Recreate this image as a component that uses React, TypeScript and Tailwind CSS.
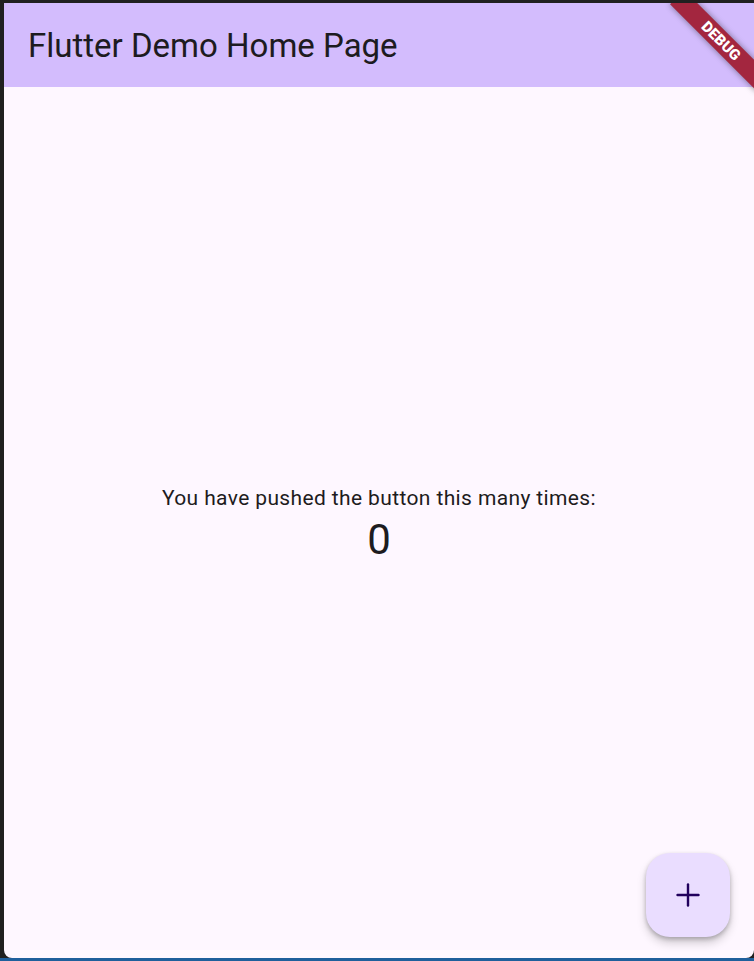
import { Plus } from "lucide-react";

const App = () => {
  return (
    <div className="w-[754px] h-[961px] bg-[#202020] flex flex-col overflow-hidden font-['Roboto',sans-serif]">
      <div className="flex-1 flex pt-[3px] pl-[4px] min-h-0">
        <div className="relative flex-1 flex flex-col bg-[#fef7ff] rounded-bl-[8px] rounded-br-[8px] overflow-hidden">
          <header className="h-[84px] shrink-0 bg-[#d3bcfd] flex items-center px-[24px]">
            <h1 className="text-[33px] leading-none text-[#1d1b20] font-normal">Flutter Demo Home Page</h1>
          </header>
          <main className="flex-1 flex flex-col items-center justify-center pt-[5px]">
            <p className="text-[21px] leading-[30px] tracking-[0.375px] text-[#1d1b20]">
              You have pushed the button this many times:
            </p>
            <p className="text-[42px] leading-[54px] text-[#1d1b20]">0</p>
          </main>
          <button
            className="absolute right-[24px] bottom-[21px] w-[84px] h-[84px] rounded-[24px] bg-[#eaddff] flex items-center justify-center shadow-[0_6px_10px_rgba(0,0,0,0.18),0_2px_4px_rgba(0,0,0,0.22)]"
            aria-label="Increment"
          >
            <Plus className="w-[36px] h-[36px] text-[#21005d]" strokeWidth={1.6} />
          </button>
          <div className="absolute left-[655px] top-[28px] w-[124px] h-[20px] rotate-45 bg-[#a3263f] shadow-[0_0_6px_rgba(0,0,0,0.45)] flex items-center justify-center">
            <span className="text-white text-[15px] font-black leading-none">DEBUG</span>
          </div>
        </div>
      </div>
      <div className="h-[3px] bg-[#1f5f9c] shrink-0" />
    </div>
  );
};

export default App;
